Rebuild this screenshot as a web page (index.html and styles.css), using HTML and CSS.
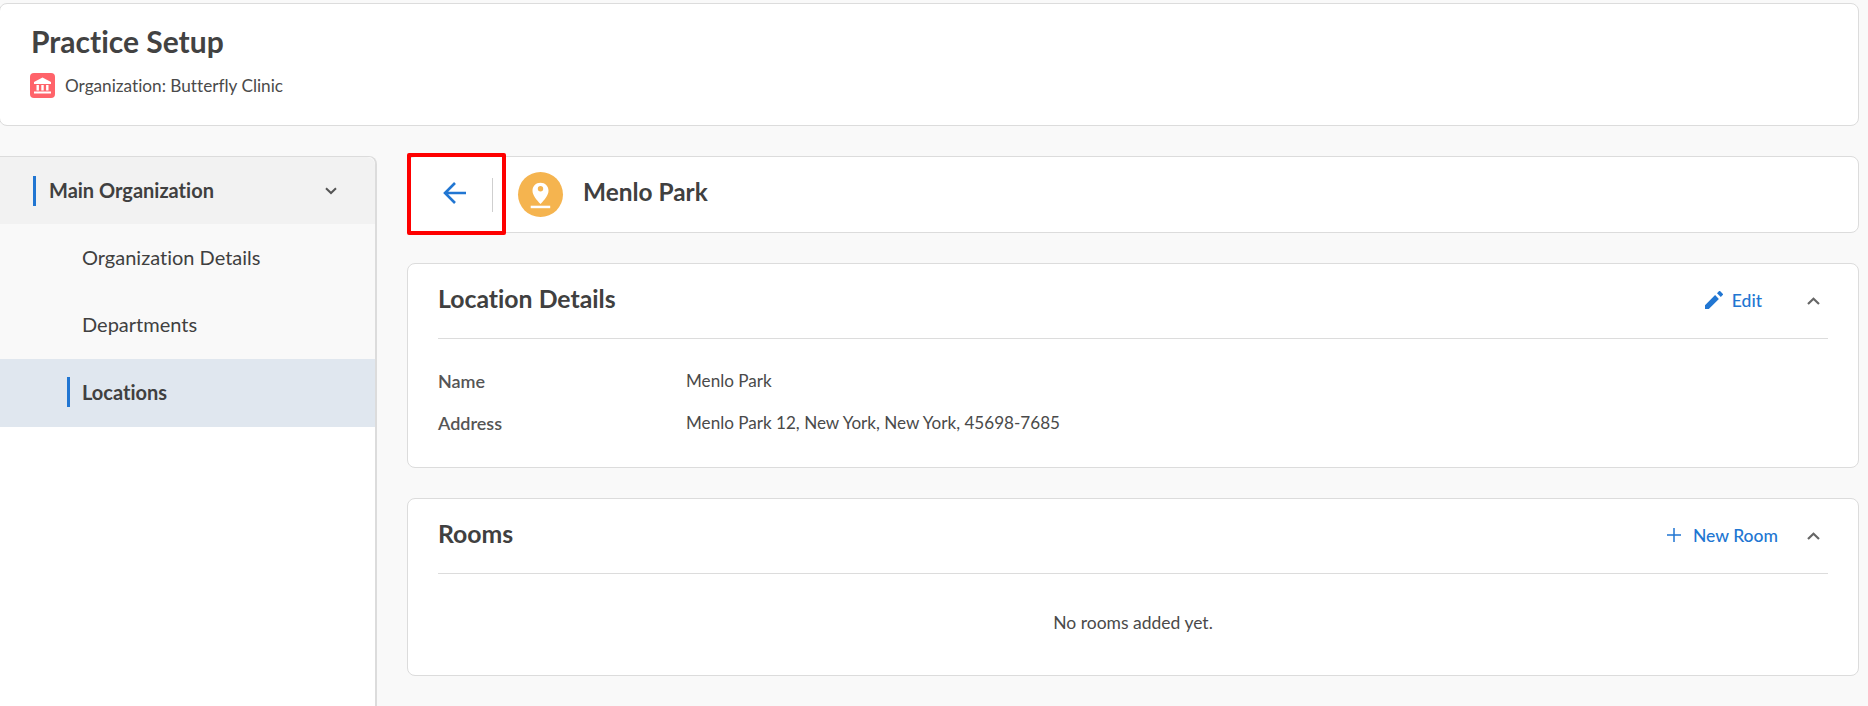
FILE: index.html
```html
<!DOCTYPE html>
<html lang="en">
<head>
<meta charset="utf-8">
<title>Practice Setup</title>
<link rel="stylesheet" href="styles.css">
</head>
<body>
<header class="page-head">
  <h1 class="page-title">Practice Setup</h1>
  <div class="org-line">
    <span class="org-icon">
      <svg viewBox="0 0 25 25" width="25" height="25"><path fill="#fff" d="M12.500 4.500 4 9v2h17V9z"/><rect fill="#fff" x="6.500" y="12" width="2.400" height="5.500"/><rect fill="#fff" x="11.300" y="12" width="2.400" height="5.500"/><rect fill="#fff" x="16.100" y="12" width="2.400" height="5.500"/><rect fill="#fff" x="4" y="18.500" width="17" height="2"/></svg>
    </span>
    <span>Organization: Butterfly Clinic</span>
  </div>
</header>
<div class="layout">
  <nav class="sidebar">
    <div class="nav-head">
      <span class="nav-bar"></span>
      <span class="nav-head-label">Main Organization</span>
      <svg class="nav-chevron" viewBox="0 0 12 8" width="12" height="8"><path d="M1 1.200 6 6l5-4.800" fill="none" stroke="#555" stroke-width="2"/></svg>
    </div>
    <div class="nav-item">Organization Details</div>
    <div class="nav-item">Departments</div>
    <div class="nav-item nav-item-active"><span class="nav-bar-sub"></span>Locations</div>
  </nav>
  <main class="content">
    <section class="title-card">
      <button class="back-btn" aria-label="Back">
        <svg viewBox="0 0 24 22" width="24" height="22"><path d="M23 11H2M12 1 2 11l10 10" fill="none" stroke="#2176d2" stroke-width="2.600"/></svg>
      </button>
      <span class="v-rule"></span>
      <span class="pin-circle">
        <svg viewBox="0 0 45 45" width="45" height="45"><path fill="#fff" fill-rule="evenodd" d="M22.500 10.700c-4.600 0-8 3.500-8 8 0 4.500 4 9 8 13.300 4-4.300 8-8.800 8-13.300 0-4.500-3.400-8-8-8zm0 3.400a2.700 2.700 0 1 1 0 5.400 2.700 2.700 0 0 1 0-5.400z"/><rect fill="#fff" x="12.700" y="33.700" width="19.500" height="2.500"/></svg>
      </span>
      <h2 class="title-name">Menlo Park</h2>
      <span class="annotation"></span>
    </section>

    <section class="card card-details">
      <div class="card-head">
        <h3 class="card-title">Location Details</h3>
        <a class="card-action action-edit">
          <svg viewBox="0 0 18 18" width="18" height="18"><path fill="#2176d2" d="M0 14.200V18h3.800L13.900 7.900 10.100 4.100zM17.700 4.100a1 1 0 0 0 0-1.400L15.300.3a1 1 0 0 0-1.400 0L12 2.200 15.800 6z"/></svg>
          <span>Edit</span>
        </a>
        <svg class="card-chevron" viewBox="0 0 13 8" width="13" height="8"><path d="M1 7 6.500 1.800 12 7" fill="none" stroke="#666" stroke-width="2.200"/></svg>
      </div>
      <dl class="fields">
        <dt>Name</dt><dd>Menlo Park</dd>
        <dt>Address</dt><dd>Menlo Park 12, New York, New York, 45698-7685</dd>
      </dl>
    </section>

    <section class="card card-rooms">
      <div class="card-head">
        <h3 class="card-title">Rooms</h3>
        <a class="card-action action-room">
          <svg viewBox="0 0 14 14" width="14" height="14"><path d="M7 0v14M0 7h14" fill="none" stroke="#2176d2" stroke-width="1.500"/></svg>
          <span>New Room</span>
        </a>
        <svg class="card-chevron" viewBox="0 0 13 8" width="13" height="8"><path d="M1 7 6.500 1.800 12 7" fill="none" stroke="#666" stroke-width="2.200"/></svg>
      </div>
      <p class="empty">No rooms added yet.</p>
    </section>
  </main>
</div>
</body>
</html>
```
FILE: styles.css
```css
* { box-sizing: border-box; }
html, body { height: 100%; }
body {
  margin: 0;
  background: #f9f9f9;
  font-family: "Lato", "Liberation Sans", sans-serif;
  font-variant-ligatures: none;
  color: #404040;
  overflow: hidden;
}
.page-head {
  margin: 3px 9px 0 -1px;
  height: 123px;
  background: #fff;
  border: 1px solid #dcdcdc;
  border-radius: 8px;
  padding: 20px 0 0 31px;
}
.page-title {
  margin: 0;
  font-size: 30px;
  line-height: 34px;
  font-weight: 700;
  color: #424242;
}
.org-line {
  display: flex;
  align-items: center;
  gap: 10px;
  margin-top: 15px;
  font-size: 17.2px;
  color: #4a4a4a;
  margin-left: -1px;
}
.org-icon {
  display: block;
  width: 25px;
  height: 25px;
  background: #ff636a;
  border-radius: 4px;
}
.org-icon svg { display: block; }
.layout {
  display: flex;
  margin-top: 30px;
  height: 550px;
}
.sidebar {
  width: 377px;
  flex: none;
  background: #fff;
  border: 1px solid #dcdcdc;
  border-width: 1px 2px 0 0;
  border-top-right-radius: 8px;
}
.nav-head {
  display: flex;
  align-items: center;
  height: 67px;
  background: #f2f2f2;
  padding-left: 33px;
  border-top-right-radius: 8px;
}
.nav-bar {
  width: 3px;
  height: 30px;
  background: #2176d2;
}
.nav-head-label {
  margin: 0 0 1px 13px;
  font-size: 20px;
  font-weight: 700;
  flex: 1;
}
.nav-chevron { margin-right: 38px; }
.nav-item {
  display: flex;
  align-items: center;
  height: 67.67px;
  padding-left: 82px;
  padding-bottom: 2px;
  background: #f9f9f9;
  font-size: 20px;
  position: relative;
}
.nav-item-active {
  background: #e0e7ef;
  font-weight: 700;
  padding-left: 83px;
  padding-bottom: 3px;
}
.nav-bar-sub {
  width: 3px;
  height: 30px;
  background: #2176d2;
  margin-left: -16px;
  margin-right: 12px;
}
.content {
  flex: 1;
  padding-left: 30px;
  padding-right: 9px;
}
.title-card {
  position: relative;
  display: flex;
  align-items: center;
  height: 77px;
  background: #fff;
  border: 1px solid #dcdcdc;
  border-radius: 8px;
}
.back-btn {
  display: flex;
  border: 0;
  background: none;
  padding: 0;
  margin: 0 0 3px 35px;
}
.v-rule {
  width: 1px;
  height: 34px;
  background: #cfcfcf;
  margin-left: 25px;
}
.pin-circle {
  display: block;
  width: 45px;
  height: 45px;
  margin-left: 25px;
  border-radius: 50%;
  background: #f5b44f;
}
.pin-circle svg { display: block; }
.title-name {
  margin: 0 0 6px 20px;
  font-size: 24.4px;
  font-weight: 700;
}
.annotation {
  position: absolute;
  left: -1px;
  top: -4px;
  width: 99px;
  height: 82px;
  border: 4px solid #fe0000;
  border-radius: 2px;
}
.card {
  background: #fff;
  border: 1px solid #dcdcdc;
  border-radius: 8px;
  padding: 0 30px;
}
.card-details {
  margin-top: 30px;
  height: 205px;
}
.card-rooms {
  margin-top: 30px;
  height: 178px;
}
.card-head {
  display: flex;
  align-items: center;
  height: 75px;
  border-bottom: 1px solid #dcdcdc;
}
.card-title {
  margin: 0 0 5px;
  flex: 1;
  font-size: 24.8px;
  font-weight: 700;
}
.card-action {
  display: flex;
  align-items: center;
  color: #2176d2;
  font-size: 17.5px;
  font-weight: 500;
  margin-bottom: 2px;
}
.action-edit { gap: 9px; margin-right: 45px; }
.action-room { gap: 12px; margin-right: 29px; }
.card-chevron { margin-right: 8px; }
.fields {
  display: grid;
  grid-template-columns: 248px 1fr;
  row-gap: 20px;
  margin: 31px 0 0;
  font-size: 17.1px;
  line-height: 22px;
}
.fields dt {
  font-size: 18px;
  font-weight: 600;
  color: #555;
}
.fields dd {
  margin: 0;
  color: #4a4a4a;
}
.empty {
  margin: 38px 0 0;
  text-align: center;
  font-size: 17.5px;
  line-height: 22px;
  color: #4a4a4a;
}
```
